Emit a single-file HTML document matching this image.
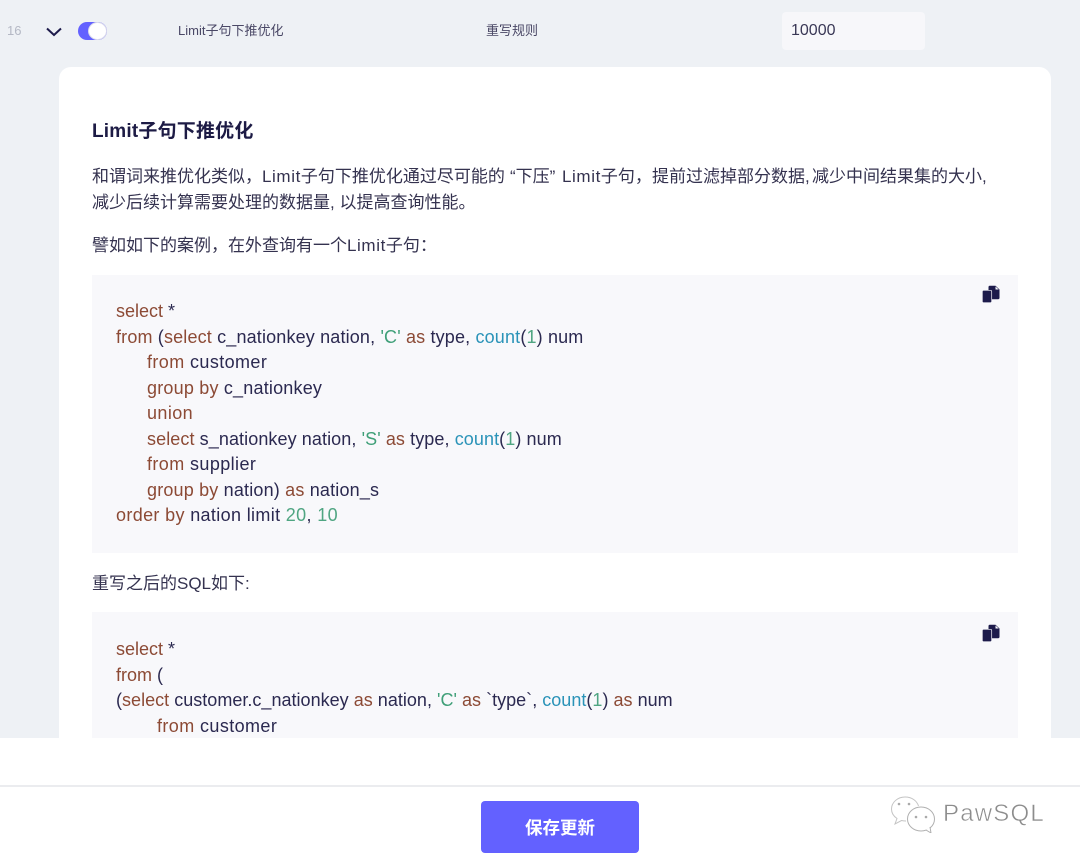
<!DOCTYPE html>
<html lang="zh"><head><meta charset="utf-8"><title>Limit子句下推优化</title>
<style>
html,body{margin:0;padding:0;background:#fff}
#p{position:relative;width:1080px;height:862px;overflow:hidden;background:#fff;font-family:"Liberation Sans","Noto Sans CJK SC",sans-serif;color:#27254a}
.a{position:absolute;white-space:pre}
.t{font-size:17px;line-height:26px;color:#34324f}
.c{font-size:18px;line-height:26px;color:#2b2950}
.k{color:#8c4a35}.s{color:#3f9f78}.f{color:#2a93b8}.n{color:#4fa582}
.l{letter-spacing:.6px}
.b{position:absolute;left:92px;width:926px;background:#f8f8fb}
</style></head><body><div id="p">
<div class="a" style="left:0;top:0;width:1080px;height:738px;background:#eef1f5"></div>
<div class="a" style="left:7px;top:23px;font-size:13px;line-height:16px;color:#b4b8c4">16</div>
<svg class="a" style="left:46px;top:27px" width="16" height="10" viewBox="0 0 16 10"><path d="M1 1.500L8 8L15 1.500" fill="none" stroke="#1d1b4b" stroke-width="2"/></svg>
<div class="a" style="left:78px;top:22px;width:29px;height:18px;border-radius:9px;background:#6361ff"></div>
<div class="a" style="left:88px;top:22px;width:17px;height:16px;border-radius:50%;background:#fff;border:1px solid #dcdcec"></div>
<div class="a" style="left:178px;top:23px;font-size:13px;line-height:16px;color:#4a4866">Limit子句下推优化</div>
<div class="a" style="left:486px;top:23px;font-size:13px;line-height:16px;color:#4a4866">重写规则</div>
<div class="a" style="left:782px;top:12px;width:143px;height:38px;border-radius:4px;background:#f7f7fa"></div>
<div class="a" style="left:791px;top:22px;font-size:16px;line-height:18px;color:#3a3856">10000</div>
<div class="a" style="left:59px;top:67px;width:992px;height:690px;border-radius:12px;background:#fff"></div>
<div class="a" style="left:92px;top:119px;font-size:19px;line-height:26px;font-weight:700;letter-spacing:.2px;color:#1d1b45">Limit子句下推优化</div>
<div class="a t" style="left:92px;top:164px">和谓词来推优化类似，</div>
<div class="a t" style="left:262px;top:164px"><span class="l">Limit</span>子句下推优化通过尽可能的</div>
<div class="a t" style="left:510px;top:164px">“下压”</div>
<div class="a t" style="left:562px;top:164px"><span class="l">Limit</span>子句，</div>
<div class="a t" style="left:652px;top:164px">提前过滤掉部分数据,</div>
<div class="a t" style="left:812px;top:164px">减少中间结果集的大小,</div>
<div class="a t" style="left:92px;top:190px">减少后续计算需要处理的数据量, 以提高查询性能。</div>
<div class="a t" style="left:92px;top:233px">譬如如下的案例，在外查询有一个<span class="l">Limit</span>子句：</div>
<div class="b" style="top:275px;height:278px"></div>
<svg class="a" style="left:982px;top:285px" width="18" height="18" viewBox="0 0 18 18"><path fill="#1d1b4b" d="M6.500 2Q6.500 .8 7.700 .8H13.500L17.500 4.500V13Q17.500 14.200 16.300 14.200H6.500Z"/><path fill="#f8f8fb" d="M13.500 1.500L16.800 4.500H13.500Z"/><path fill="#1d1b4b" stroke="#f8f8fb" stroke-width=".7" d="M.3 6.500Q.3 5.300 1.500 5.300H8.500Q9.700 5.300 9.700 6.500V16.500Q9.700 17.700 8.500 17.700H1.500Q.3 17.700 .3 16.500Z"/></svg>
<div class="a c" style="left:116px;top:298px"><span class="k">select</span> *</div>
<div class="a c" style="left:116px;top:324px;letter-spacing:.16px"><span class="k">from</span> (<span class="k">select</span> c_nationkey nation, <span class="s">'C'</span> <span class="k">as</span> type, <span class="f">count</span>(<span class="n">1</span>) num</div>
<div class="a c" style="left:147px;top:349px;letter-spacing:.4px"><span class="k">from</span> customer</div>
<div class="a c" style="left:147px;top:375px;letter-spacing:.2px"><span class="k">group by</span> c_nationkey</div>
<div class="a c" style="left:147px;top:400px;letter-spacing:.4px"><span class="k">union</span></div>
<div class="a c" style="left:147px;top:426px;letter-spacing:.09px"><span class="k">select</span> s_nationkey nation, <span class="s">'S'</span> <span class="k">as</span> type, <span class="f">count</span>(<span class="n">1</span>) num</div>
<div class="a c" style="left:147px;top:451px;letter-spacing:.4px"><span class="k">from</span> supplier</div>
<div class="a c" style="left:147px;top:477px;letter-spacing:.18px"><span class="k">group by</span> nation) <span class="k">as</span> nation_s</div>
<div class="a c" style="left:116px;top:502px;letter-spacing:.35px"><span class="k">order by</span> nation limit <span class="n">20</span>, <span class="n">10</span></div>
<div class="a t" style="left:92px;top:571px">重写之后的SQL如下:</div>
<div class="b" style="top:612px;height:126px"></div>
<svg class="a" style="left:982px;top:624px" width="18" height="18" viewBox="0 0 18 18"><path fill="#1d1b4b" d="M6.500 2Q6.500 .8 7.700 .8H13.500L17.500 4.500V13Q17.500 14.200 16.300 14.200H6.500Z"/><path fill="#f8f8fb" d="M13.500 1.500L16.800 4.500H13.500Z"/><path fill="#1d1b4b" stroke="#f8f8fb" stroke-width=".7" d="M.3 6.500Q.3 5.300 1.500 5.300H8.500Q9.700 5.300 9.700 6.500V16.500Q9.700 17.700 8.500 17.700H1.500Q.3 17.700 .3 16.500Z"/></svg>
<div class="a c" style="left:116px;top:636px"><span class="k">select</span> *</div>
<div class="a c" style="left:116px;top:662px"><span class="k">from</span> (</div>
<div class="a c" style="left:116px;top:687px;letter-spacing:.02px">(<span class="k">select</span> customer.c_nationkey <span class="k">as</span> nation, <span class="s">'C'</span> <span class="k">as</span> `type`, <span class="f">count</span>(<span class="n">1</span>) <span class="k">as</span> num</div>
<div class="a c" style="left:157px;top:713px;letter-spacing:.4px"><span class="k">from</span> customer</div>
<div class="a" style="left:0;top:738px;width:1080px;height:124px;background:#fff"></div>
<div class="a" style="left:0;top:785px;width:1080px;height:2px;background:#ebecef"></div>
<div class="a" style="left:481px;top:801px;width:158px;height:52px;border-radius:4px;background:#6361ff"></div>
<div class="a" style="left:481px;top:802px;width:158px;line-height:52px;text-align:center;font-size:17.500px;font-weight:700;color:#fff">保存更新</div>
<svg class="a" style="left:890px;top:795px" width="48" height="38" viewBox="0 0 48 38"><path d="M15 2C7.500 2 1.500 7.500 1.500 14C1.500 18 4 21.500 7 23.500L5 29L11.500 25.500Q13.500 26 16 26" fill="#fff" stroke="#c4c4c4" stroke-width="1"/><path d="M15 2C22 2 27 6 28.500 11" fill="none" stroke="#c4c4c4"/><ellipse cx="31" cy="24" rx="13.500" ry="12" fill="#fff" stroke="#b0b0b0"/><path d="M36 35L41 38L40 32" fill="#fff" stroke="#b0b0b0"/><circle cx="9" cy="9" r="1.300" fill="#aaa"/><circle cx="19" cy="9" r="1.300" fill="#aaa"/><circle cx="26" cy="22" r="1.300" fill="#aaa"/><circle cx="36" cy="22" r="1.300" fill="#aaa"/></svg>
<div class="a" style="left:943px;top:797px;font-size:24px;line-height:34px;letter-spacing:1.200px;color:#8c8c8c;-webkit-text-stroke:.5px #fff;font-weight:400">PawSQL</div>
</div></body></html>
